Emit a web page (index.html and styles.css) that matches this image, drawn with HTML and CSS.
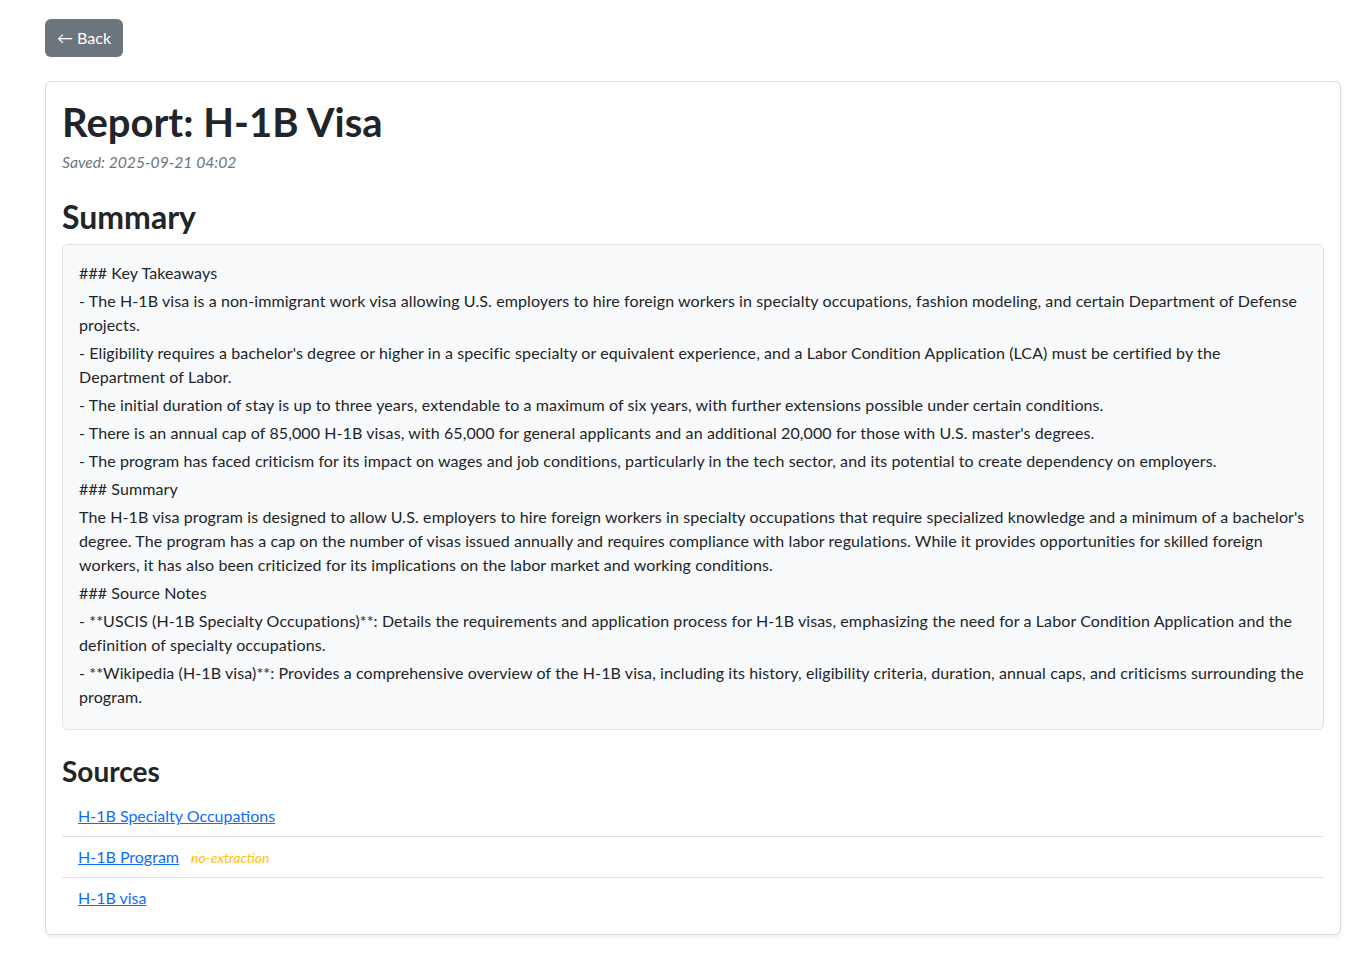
FILE: index.html
```html
<!DOCTYPE html>
<html lang="en">
<head>
<meta charset="utf-8">
<title>Report: H-1B Visa</title>
<link rel="stylesheet" href="styles.css">
</head>
<body>
<main class="page">
  <a class="btn-back" href="#">← Back</a>
  <section class="card">
    <h1 class="title">Report: H-1B Visa</h1>
    <p class="saved">Saved: 2025-09-21 04:02</p>
    <h2 class="section-title">Summary</h2>
    <div class="summary">
      <p>### Key Takeaways</p>
      <p>- The H-1B visa is a non-immigrant work visa allowing U.S. employers to hire foreign workers in specialty occupations, fashion modeling, and certain Department of Defense projects.</p>
      <p>- Eligibility requires a bachelor's degree or higher in a specific specialty or equivalent experience, and a Labor Condition Application (LCA) must be certified by the Department of Labor.</p>
      <p>- The initial duration of stay is up to three years, extendable to a maximum of six years, with further extensions possible under certain conditions.</p>
      <p>- There is an annual cap of 85,000 H-1B visas, with 65,000 for general applicants and an additional 20,000 for those with U.S. master's degrees.</p>
      <p>- The program has faced criticism for its impact on wages and job conditions, particularly in the tech sector, and its potential to create dependency on employers.</p>
      <p>### Summary</p>
      <p>The H-1B visa program is designed to allow U.S. employers to hire foreign workers in specialty occupations that require specialized knowledge and a minimum of a bachelor's degree. The program has a cap on the number of visas issued annually and requires compliance with labor regulations. While it provides opportunities for skilled foreign workers, it has also been criticized for its implications on the labor market and working conditions.</p>
      <p>### Source Notes</p>
      <p>- **USCIS (H-1B Specialty Occupations)**: Details the requirements and application process for H-1B visas, emphasizing the need for a Labor Condition Application and the definition of specialty occupations.</p>
      <p>- **Wikipedia (H-1B visa)**: Provides a comprehensive overview of the H-1B visa, including its history, eligibility criteria, duration, annual caps, and criticisms surrounding the program.</p>
    </div>
    <h3 class="sources-title">Sources</h3>
    <ul class="sources">
      <li class="source-item"><a href="#">H-1B Specialty Occupations</a></li>
      <li class="source-item"><a href="#">H-1B Program</a> <span class="flag">no-extraction</span></li>
      <li class="source-item"><a href="#">H-1B visa</a></li>
    </ul>
  </section>
</main>
</body>
</html>
```

FILE: styles.css
```css
* { box-sizing: border-box; }

html, body {
  margin: 0;
  padding: 0;
  background: #fff;
}

body {
  font-family: Lato, "Noto Sans", sans-serif;
  font-size: 16px;
  line-height: 1.5;
  color: #212529;
}

.page {
  padding: 19px 13px 23px 45px;
}

.btn-back {
  display: inline-block;
  background: #6c757d;
  color: #fff;
  text-decoration: none;
  font-size: 16px;
  line-height: 24px;
  padding: 7px 12px;
  border-radius: 6px;
}

.card {
  margin-top: 24px;
  border: 1px solid #dadcdf;
  border-radius: 6px;
  padding: 16px;
  box-shadow: 0 2px 4px rgba(0, 0, 0, 0.075);
  background: #fff;
}

.title {
  margin: 0 0 4px;
  font-size: 40px;
  line-height: 1.2;
  font-weight: 700;
}

.saved {
  margin: 0 0 24px;
  font-size: 15.7px;
  line-height: 24px;
  font-style: italic;
  color: #6c757d;
}

.section-title {
  margin: 0 0 8px;
  font-size: 32px;
  line-height: 1.2;
  font-weight: 700;
}

.summary {
  background: #f8f9fa;
  border: 1px solid #dee2e6;
  border-radius: 6px;
  padding: 16px;
  letter-spacing: 0.1px;
}

.summary p {
  margin: 0 0 4px;
}

.sources-title {
  margin: 25px 0 7px;
  font-size: 28px;
  line-height: 1.2;
  font-weight: 700;
}

.sources {
  list-style: none;
  margin: 0;
  padding: 0;
}

.source-item {
  padding: 8px 16px;
  border-bottom: 1px solid #dee2e6;
}

.source-item:last-child {
  border-bottom: none;
}

.source-item a {
  color: #0d6efd;
  text-decoration: underline;
}

.flag {
  margin-left: 8px;
  font-size: 14px;
  font-style: italic;
  color: #ffc107;
}
```
